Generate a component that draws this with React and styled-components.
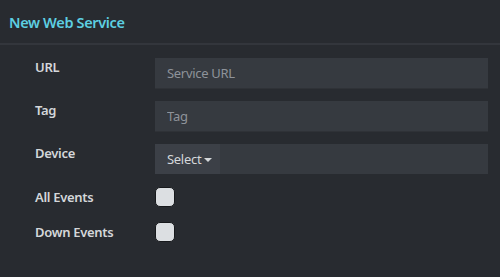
import styled, { createGlobalStyle } from 'styled-components';

const Global = createGlobalStyle`
  html, body {
    margin: 0;
    padding: 0;
    background: #282b30;
    font-family: "Noto Sans", "Open Sans", sans-serif;
  }
`;

const Panel = styled.div`
  width: 500px;
  height: 277px;
  background: #282b30;
  display: flex;
  flex-direction: column;
`;

const Header = styled.div`
  height: 45px;
  border-bottom: 2px solid #33363c;
  display: flex;
  align-items: center;
  padding: 1px 0 0 9px;
  box-sizing: border-box;
  flex-shrink: 0;
`;

const Title = styled.h4`
  margin: 0;
  font-size: 14.5px;
  font-weight: 600;
  color: #5dcfe2;
  letter-spacing: -0.35px;
`;

const Body = styled.div`
  display: flex;
  flex-direction: column;
  padding: 13px 12px 0 35px;
`;

const Row = styled.div`
  display: grid;
  grid-template-columns: 120px 1fr;
  align-items: ${({ $center }) => ($center ? 'center' : 'start')};
  margin-bottom: ${({ $gap }) => $gap}px;
`;

const Label = styled.label`
  font-size: 13px;
  font-weight: 600;
  color: #d4d7da;
  line-height: 18px;
  letter-spacing: -0.3px;
`;

const Input = styled.input`
  height: 31px;
  box-sizing: border-box;
  background: #363a40;
  border: none;
  border-bottom: 1px solid #2f3237;
  padding: 0 12px;
  font-family: inherit;
  font-size: 13px;
  color: #d4d7da;
  outline: none;
  letter-spacing: -0.3px;

  &::placeholder {
    color: #8e939a;
  }
`;

const SelectGroup = styled.div`
  height: 30px;
  display: flex;
  background: #363a40;
`;

const SelectButton = styled.button`
  width: 65px;
  height: 30px;
  border: none;
  background: #3c4047;
  color: #d4d7da;
  font-family: inherit;
  font-size: 13px;
  padding: 0 0 0 12px;
  display: flex;
  align-items: center;
  gap: 3px;
  letter-spacing: -0.3px;

  &::after {
    content: '';
    border-left: 4px solid transparent;
    border-right: 4px solid transparent;
    border-top: 4px solid #d4d7da;
    margin-top: 1px;
  }
`;

const Check = styled.span`
  display: block;
  width: 18px;
  height: 18px;
  background: #dcdfe2;
  border: 1px solid #17191c;
  border-radius: 5px;
`;

export default function App() {
  return (
    <Panel>
      <Global />
      <Header>
        <Title>New Web Service</Title>
      </Header>
      <Body>
        <Row $gap={12}>
          <Label>URL</Label>
          <Input placeholder="Service URL" />
        </Row>
        <Row $gap={12}>
          <Label>Tag</Label>
          <Input placeholder="Tag" />
        </Row>
        <Row $gap={13}>
          <Label>Device</Label>
          <SelectGroup>
            <SelectButton type="button">Select</SelectButton>
          </SelectGroup>
        </Row>
        <Row $gap={15} $center>
          <Label>All Events</Label>
          <Check />
        </Row>
        <Row $gap={0} $center>
          <Label>Down Events</Label>
          <Check />
        </Row>
      </Body>
    </Panel>
  );
}
